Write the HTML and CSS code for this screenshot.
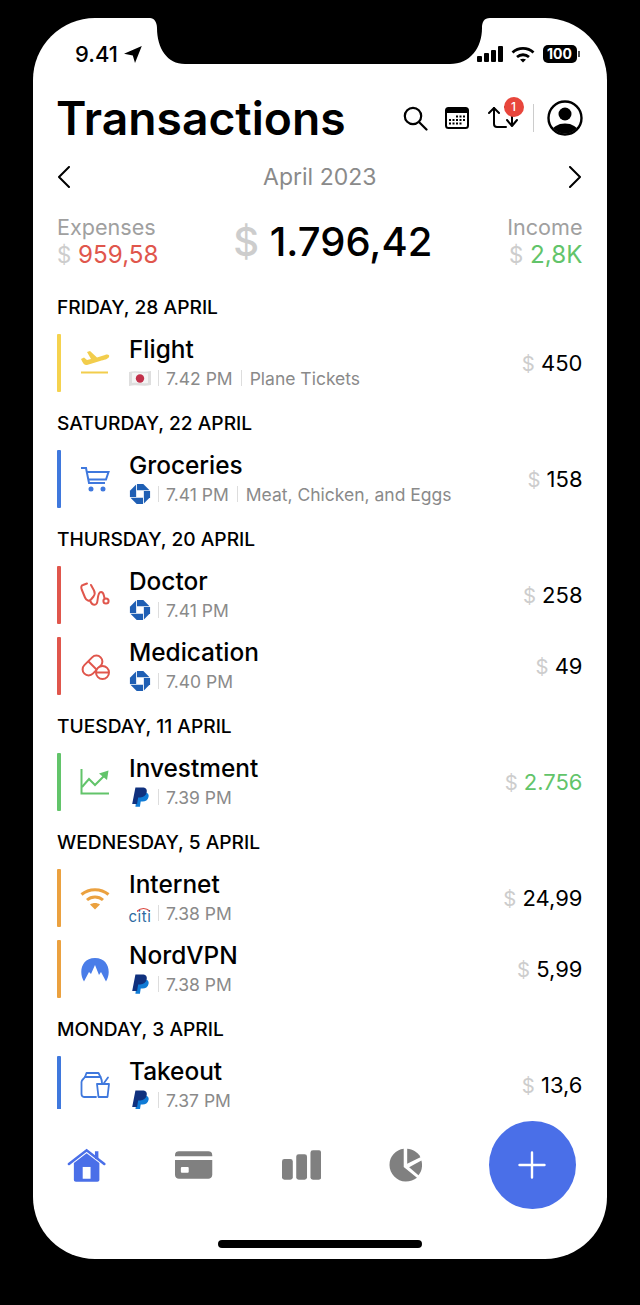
FILE: index.html
```html
<!DOCTYPE html>
<html lang="en">

<head>
    <meta charset="UTF-8">
    <meta name="viewport" content="width=device-width, initial-scale=1.0">
    <title>Transactions</title>
    <link rel="stylesheet" href="styles.css">
</head>

<body>

    <svg class="defs" width="0" height="0">
        <symbol id="chase" viewBox="0 0 24 24">
            <g fill="#1f5fb4">
                <path d="M8.700 1H15.600L22.400 7.800H8.700Z" />
                <path d="M8.700 1H15.600L22.400 7.800H8.700Z" transform="rotate(90 12 12)" />
                <path d="M8.700 1H15.600L22.400 7.800H8.700Z" transform="rotate(180 12 12)" />
                <path d="M8.700 1H15.600L22.400 7.800H8.700Z" transform="rotate(270 12 12)" />
            </g>
        </symbol>
        <symbol id="paypal" viewBox="0 0 24 24">
            <path fill="#0f7bd6" d="M9 7h8c3.500 0 5 2 4.300 5-.7 3.200-3.300 5-6.500 5h-2l-.9 5.500H7Z" />
            <path fill="#10317e" d="M7 1.500h7.500c3.800 0 5.500 2 4.800 5.300-.8 3.500-3.500 5.700-7 5.700H10l-1.200 7H3.500Z" />
        </symbol>
    </svg>

    <div class="screen">
        <svg class="notch" viewBox="0 0 340 46" width="340" height="46">
            <path d="M0 0H340C334 0 332 4 332 10C332 30 320 46 300 46H35C17 46 7 30 7 10C7 4 4 0 0 0Z" />
        </svg>

        <div class="status-bar">
            <div class="status-time">
                <span>9.41</span>
                <svg width="18" height="17" viewBox="0 0 18 17"><path d="M17.800 0 11 17 8.800 9.500 0 7.800Z" /></svg>
            </div>
            <div class="status-icons">
                <svg width="26" height="16" viewBox="0 0 26 16">
                    <rect x="0" y="10" width="5" height="6" rx="1" />
                    <rect x="7" y="7" width="5" height="9" rx="1" />
                    <rect x="14" y="4" width="5" height="12" rx="1" />
                    <rect x="21" y="0" width="5" height="16" rx="1" />
                </svg>
                <svg width="24" height="17" viewBox="0 0 24 17" fill="none" stroke="#000" stroke-width="2.800">
                    <path d="M1.500 6.500C7.500 1 16.500 1 22.500 6.500" />
                    <path d="M6 11C9.500 8 14.500 8 18 11" />
                    <path d="M12 16.500 9 13.600C10.700 12.300 13.300 12.300 15 13.600Z" fill="#000" stroke="none" />
                </svg>
                <div class="battery"><span class="battery-level">100</span><span class="battery-nub"></span></div>
            </div>
        </div>

        <header class="title-row">
            <h1>Transactions</h1>
            <div class="actions">
                <svg class="act-search" width="25" height="25" viewBox="0 0 25 25" fill="none" stroke="#000" stroke-width="2.200">
                    <circle cx="10" cy="10" r="8.200" />
                    <path d="M16 16 23.500 23.500" stroke-linecap="round" />
                </svg>
                <svg class="act-calendar" width="24" height="22" viewBox="0 0 24 22">
                    <rect x="1" y="1" width="22" height="20" rx="2.500" fill="#fff" stroke="#000" stroke-width="2" />
                    <rect x="1" y="1" width="22" height="5" fill="#000" />
                    <g fill="#000">
                        <rect x="11" y="8.500" width="2" height="2" /><rect x="14.500" y="8.500" width="2" height="2" /><rect x="18" y="8.500" width="2" height="2" />
                        <rect x="4" y="12" width="2" height="2" /><rect x="7.500" y="12" width="2" height="2" /><rect x="11" y="12" width="2" height="2" /><rect x="14.500" y="12" width="2" height="2" /><rect x="18" y="12" width="2" height="2" />
                        <rect x="4" y="15.500" width="2" height="2" /><rect x="7.500" y="15.500" width="2" height="2" /><rect x="11" y="15.500" width="2" height="2" /><rect x="14.500" y="15.500" width="2" height="2" />
                    </g>
                </svg>
                <div class="act-sync">
                    <svg width="30" height="22" viewBox="0 0 30 22" fill="none" stroke="#000" stroke-width="2" stroke-linecap="round" stroke-linejoin="round">
                        <path d="M1 7 6 2 11 7" />
                        <path d="M6 2V18C6 20 7 21 9 21H18" />
                        <path d="M17 1H24V19" />
                        <path d="M19 14 24 20 29 14" />
                    </svg>
                    <span class="badge">1</span>
                </div>
                <span class="act-divider"></span>
                <svg width="36" height="36" viewBox="0 0 36 36">
                    <defs><clipPath id="avatar-clip"><circle cx="18" cy="18" r="15.500" /></clipPath></defs>
                    <circle cx="18" cy="18" r="16.500" fill="#fff" stroke="#000" stroke-width="2.400" />
                    <circle cx="18" cy="14" r="6.500" fill="#000" />
                    <ellipse cx="18" cy="32" rx="13" ry="8.500" fill="#000" clip-path="url(#avatar-clip)" />
                </svg>
            </div>
        </header>

        <div class="month-nav">
            <svg width="14" height="22" viewBox="0 0 14 22" fill="none" stroke="#000" stroke-width="2" stroke-linecap="round" stroke-linejoin="round"><path d="M12 1 2 11 12 21" /></svg>
            <span class="month-label">April 2023</span>
            <svg width="14" height="22" viewBox="0 0 14 22" fill="none" stroke="#000" stroke-width="2" stroke-linecap="round" stroke-linejoin="round"><path d="M2 1 12 11 2 21" /></svg>
        </div>

        <section class="summary">
            <div class="summary-side">
                <div class="summary-label">Expenses</div>
                <div class="summary-value red"><span class="cur">$</span> 959,58</div>
            </div>
            <div class="summary-total"><span class="cur">$</span> 1.796,42</div>
            <div class="summary-side right">
                <div class="summary-label">Income</div>
                <div class="summary-value green"><span class="cur">$</span> 2,8K</div>
            </div>
        </section>

        <main class="list">
            <h2 class="day">FRIDAY, 28 APRIL</h2>
            <div class="row">
                <span class="bar yellow"></span>
                <div class="row-icon">
                    <svg width="30" height="26" viewBox="0 0 30 26" fill="#f2cd4c">
                        <path d="M1 9 4 7.500 7 10 11 9 7 2 10 1 17 7.500 25 5C28 4 30 5 29 7 28 9 24 10 20 11L7 15C5 15.500 3 14 1 9Z" />
                        <rect x="1" y="21.500" width="27" height="2" />
                    </svg>
                </div>
                <div class="row-body">
                    <div class="row-title">Flight</div>
                    <div class="row-sub">
                        <svg class="mini" width="22" height="17" viewBox="0 0 22 17">
                            <path fill="#dedede" d="M0 2C7 0 14 3 22 1V15C14 17 7 14 0 16Z" />
                            <path fill="#f4f4f4" d="M3 3C8 2 14 4 19 3V13C14 14 8 12 3 13Z" />
                            <circle cx="11" cy="8.500" r="4.200" fill="#c2304a" />
                        </svg>
                        <span class="sep"></span><span>7.42 PM</span><span class="sep tag-sep"></span><span>Plane Tickets</span>
                    </div>
                </div>
                <div class="amount"><span class="cur">$</span> 450</div>
            </div>

            <h2 class="day">SATURDAY, 22 APRIL</h2>
            <div class="row">
                <span class="bar blue"></span>
                <div class="row-icon">
                    <svg width="30" height="26" viewBox="0 0 30 26" fill="none" stroke="#3f78dd" stroke-width="2">
                        <path d="M1 2H6L9 17H25" />
                        <path d="M6.500 6H28.500L26 13.500H8" />
                        <circle cx="11" cy="23" r="1.500" fill="#3f78dd" />
                        <circle cx="23" cy="23" r="1.500" fill="#3f78dd" />
                    </svg>
                </div>
                <div class="row-body">
                    <div class="row-title">Groceries</div>
                    <div class="row-sub">
                        <svg class="mini" width="22" height="22"><use href="#chase" /></svg>
                        <span class="sep"></span><span>7.41 PM</span><span class="sep tag-sep"></span><span>Meat, Chicken, and Eggs</span>
                    </div>
                </div>
                <div class="amount"><span class="cur">$</span> 158</div>
            </div>

            <h2 class="day">THURSDAY, 20 APRIL</h2>
            <div class="row">
                <span class="bar red-bg"></span>
                <div class="row-icon">
                    <svg width="30" height="26" viewBox="0 0 30 26" fill="none" stroke="#e0564c" stroke-width="2" stroke-linecap="round" stroke-linejoin="round">
                        <path d="M7 1.500 3 3C1 3.500 1 5.500 1.700 7.500L5 15.500C6.500 19 9.500 19.500 11 17.500L13.500 14.500C15 12.500 15 10.500 14 8.500L11 3" />
                        <path d="M10 18.500C12.500 24.500 17 24 17.500 18.500 18 13 19 10 21 10 24 10 23.500 13 24.500 16" />
                        <circle cx="26" cy="19" r="2.600" />
                    </svg>
                </div>
                <div class="row-body">
                    <div class="row-title">Doctor</div>
                    <div class="row-sub">
                        <svg class="mini" width="22" height="22"><use href="#chase" /></svg>
                        <span class="sep"></span><span>7.41 PM</span>
                    </div>
                </div>
                <div class="amount"><span class="cur">$</span> 258</div>
            </div>
            <div class="row">
                <span class="bar red-bg"></span>
                <div class="row-icon">
                    <svg width="30" height="27" viewBox="0 0 30 27" fill="none" stroke="#e0564c" stroke-width="2">
                        <rect x="1" y="6.500" width="23" height="12" rx="6" transform="rotate(-45 12.500 12.500)" />
                        <path d="M8.500 8.500 16.500 16.500" />
                        <circle cx="22.500" cy="19.500" r="6.500" fill="#fff" />
                        <path d="M16 19.500H29" />
                    </svg>
                </div>
                <div class="row-body">
                    <div class="row-title">Medication</div>
                    <div class="row-sub">
                        <svg class="mini" width="22" height="22"><use href="#chase" /></svg>
                        <span class="sep"></span><span>7.40 PM</span>
                    </div>
                </div>
                <div class="amount"><span class="cur">$</span> 49</div>
            </div>

            <h2 class="day">TUESDAY, 11 APRIL</h2>
            <div class="row">
                <span class="bar green-bg"></span>
                <div class="row-icon">
                    <svg width="30" height="26" viewBox="0 0 30 26" fill="none" stroke="#62c46a" stroke-width="2">
                        <path d="M1.500 0V24.500H29" />
                        <path d="M2 18 9 10 15 16 25 6" />
                        <path d="M19 4.500 28.500 1.500 27 11Z" fill="#62c46a" stroke="none" />
                    </svg>
                </div>
                <div class="row-body">
                    <div class="row-title">Investment</div>
                    <div class="row-sub">
                        <svg class="mini" width="22" height="22"><use href="#paypal" /></svg>
                        <span class="sep"></span><span>7.39 PM</span>
                    </div>
                </div>
                <div class="amount green"><span class="cur">$</span> 2.756</div>
            </div>

            <h2 class="day">WEDNESDAY, 5 APRIL</h2>
            <div class="row">
                <span class="bar orange"></span>
                <div class="row-icon">
                    <svg width="30" height="23" viewBox="0 0 30 23" fill="none" stroke="#eba13f" stroke-width="3">
                        <path d="M1.500 7.500C9 1 21 1 28.500 7.500" />
                        <path d="M7 13C11.500 9 18.500 9 23 13" />
                        <path d="M15 22.500 10 17.500C13 15.500 17 15.500 20 17.500Z" fill="#eba13f" stroke="none" />
                    </svg>
                </div>
                <div class="row-body">
                    <div class="row-title">Internet</div>
                    <div class="row-sub">
                        <div class="citi">
                            <svg width="13" height="5" viewBox="0 0 13 5" fill="none" stroke="#d9453d" stroke-width="1.200"><path d="M0 4.500C3.500 .5 9.500 .5 13 4.500" /></svg>
                            <span>citi</span>
                        </div>
                        <span class="sep"></span><span>7.38 PM</span>
                    </div>
                </div>
                <div class="amount"><span class="cur">$</span> 24,99</div>
            </div>
            <div class="row">
                <span class="bar orange"></span>
                <div class="row-icon">
                    <svg width="30" height="25" viewBox="0 0 30 25">
                        <path fill="#4a7de8" d="M4 24.500C-1.500 16 1 1 15 1 29 1 31.500 16 26 24.500L21 15 19 18 15 8 11 17 9 15Z" />
                    </svg>
                </div>
                <div class="row-body">
                    <div class="row-title">NordVPN</div>
                    <div class="row-sub">
                        <svg class="mini" width="22" height="22"><use href="#paypal" /></svg>
                        <span class="sep"></span><span>7.38 PM</span>
                    </div>
                </div>
                <div class="amount"><span class="cur">$</span> 5,99</div>
            </div>

            <h2 class="day">MONDAY, 3 APRIL</h2>
            <div class="row">
                <span class="bar blue"></span>
                <div class="row-icon">
                    <svg width="30" height="28" viewBox="0 0 30 28" fill="none" stroke="#3f78dd" stroke-width="1.800" stroke-linejoin="round" stroke-linecap="round">
                        <path d="M16 26H4C2.500 26 1.500 25 1.500 23V11C1.500 9 3.500 8 5 6L6.500 2H18.500L20.500 6C21.500 8 22 9 22 12" />
                        <path d="M5 6H20.500" />
                        <path d="M17 13H29L27.500 26H18.500Z" />
                        <path d="M24 12 28 6.500" />
                    </svg>
                </div>
                <div class="row-body">
                    <div class="row-title">Takeout</div>
                    <div class="row-sub">
                        <svg class="mini" width="22" height="22"><use href="#paypal" /></svg>
                        <span class="sep"></span><span>7.37 PM</span>
                    </div>
                </div>
                <div class="amount"><span class="cur">$</span> 13,6</div>
            </div>
        </main>

        <footer class="tab-area">
            <nav class="tabs">
                <svg class="tab" width="40" height="36" viewBox="0 0 40 36">
                    <path fill="#4a6fe8" d="M7 16 20 6 33 16V33C33 34.500 32 35 31 35H9C8 35 7 34.500 7 33Z" />
                    <rect x="16" y="20" width="8" height="12" fill="#fff" />
                    <rect x="28.500" y="4" width="3.500" height="8" fill="#4a6fe8" />
                    <path d="M2 17 20 3 38 17" fill="none" stroke="#4a6fe8" stroke-width="2.600" stroke-linecap="round" />
                </svg>
                <svg class="tab card" width="40" height="30" viewBox="0 0 40 30">
                    <path fill="#808080" d="M1 5C1 2 3 1 5 1H35C37 1 39 2 39 5V6H1ZM1 10H39V25C39 28 37 29 35 29H5C3 29 1 28 1 25Z" />
                    <rect x="7" y="17" width="8" height="6" rx="1" fill="#fff" />
                </svg>
                <svg class="tab" width="40" height="30" viewBox="0 0 40 30" fill="#808080">
                    <rect x="0" y="9" width="11" height="21" rx="2.500" />
                    <rect x="14.500" y="4" width="11" height="26" rx="2.500" />
                    <rect x="29" y="0" width="11" height="30" rx="2.500" />
                </svg>
                <svg class="tab pie" width="34" height="34" viewBox="0 0 34 34" fill="#808080">
                    <path d="M15 .5V19L28.500 30C25.500 32.500 21.500 33.800 17 33.800 8 33.800.5 26 .5 17 .5 8 7 1.500 15 .5Z" />
                    <path d="M18.500.5C24 1 29.500 4 32 9L18.500 15.800Z" />
                    <path d="M33 12.500C34.500 17.500 33.500 23.500 30 27.500L20.500 19.200Z" />
                </svg>
                <button class="fab">
                    <svg width="28" height="28" viewBox="0 0 28 28" stroke="#fff" stroke-width="2.400" stroke-linecap="round"><path d="M14 1.500V26.500M1.500 14H26.500" /></svg>
                </button>
            </nav>
            <div class="home-indicator"></div>
        </footer>
    </div>

</body>

</html>
```

FILE: styles.css
```css
body {
    font-family: Inter, 'Liberation Sans', sans-serif;
    margin: 0;
    padding: 18px 0 0 33px;
    height: 1287px;
    background-color: #000;
    color: #000;
    overflow: hidden;
}

.defs {
    position: absolute;
}

.screen {
    position: relative;
    width: 573.5px;
    height: 1241px;
    background-color: #fff;
    border-radius: 62px;
    overflow: hidden;
    display: flex;
    flex-direction: column;
}

.notch {
    position: absolute;
    top: 0;
    left: 117px;
    fill: #000;
}

.status-bar {
    height: 72px;
    flex: none;
    display: flex;
    align-items: center;
    justify-content: space-between;
    padding: 0 27px 0 42px;
}

.status-time {
    display: flex;
    align-items: center;
    gap: 6px;
    font-size: 22px;
    font-weight: 500;
}

.status-icons {
    display: flex;
    align-items: center;
    gap: 8px;
}

.battery {
    display: flex;
    align-items: center;
    gap: 1px;
}

.battery-level {
    width: 34px;
    height: 18px;
    line-height: 18px;
    border-radius: 5px;
    background-color: #000;
    color: #fff;
    font-size: 14px;
    font-weight: 700;
    text-align: center;
}

.battery-nub {
    width: 2px;
    height: 6px;
    background-color: #555;
}

.title-row {
    height: 56px;
    flex: none;
    display: flex;
    align-items: center;
    justify-content: space-between;
    padding: 0 24px 0 23px;
}

h1 {
    margin: 0;
    font-size: 46.2px;
    font-weight: 600;
    line-height: 56px;
}

.actions {
    display: flex;
    align-items: center;
}

.act-search {
    margin-right: 17px;
}

.act-calendar {
    margin-right: 19px;
}

.act-sync {
    position: relative;
    width: 32px;
    height: 22px;
    margin: -2px 13px 0 0;
}

.act-sync svg {
    display: block;
}

.badge {
    position: absolute;
    top: -9px;
    right: -4px;
    width: 20px;
    height: 20px;
    line-height: 20px;
    border-radius: 50%;
    background-color: #e8463c;
    color: #fff;
    font-size: 12px;
    font-weight: 500;
    text-align: center;
}

.act-divider {
    width: 1px;
    height: 28px;
    background-color: #ccc;
    margin-right: 13px;
}

.month-nav {
    height: 30px;
    flex: none;
    margin-top: 16px;
    display: flex;
    align-items: center;
    justify-content: space-between;
    padding: 0 24px;
}

.month-label {
    font-size: 23px;
    color: #8a8a8a;
}

.summary {
    height: 58px;
    flex: none;
    margin-top: 20px;
    display: flex;
    align-items: center;
    justify-content: space-between;
    padding: 0 24px;
}

.summary-side.right {
    text-align: right;
}

.summary-label {
    font-size: 21.6px;
    line-height: 28px;
    color: #a0a0a0;
}

.summary-value {
    font-size: 24.2px;
    line-height: 28px;
}

.summary-total {
    font-size: 40px;
    font-weight: 500;
}

.cur {
    color: #cdcdcd;
}

.summary-value .cur,
.amount .cur {
    font-size: 0.92em;
}

.red {
    color: #e0564c;
}

.green {
    color: #62c46a;
}

.list {
    margin-top: 6px;
    height: 833px;
    flex: none;
    overflow: hidden;
    padding: 0 24px;
}

.day {
    margin: 0;
    padding: 23px 0 19px;
    font-size: 19.2px;
    font-weight: 500;
    line-height: 16px;
}

.row {
    display: flex;
    align-items: center;
    height: 58px;
}

.row + .row {
    margin-top: 13px;
}

.bar {
    width: 4px;
    height: 100%;
    border-radius: 1px;
    flex: none;
}

.yellow {
    background-color: #f5d24e;
}

.blue {
    background-color: #3f78dd;
}

.red-bg {
    background-color: #e0564c;
}

.green-bg {
    background-color: #62c46a;
}

.orange {
    background-color: #eba13f;
}

.row-icon {
    width: 68px;
    flex: none;
    display: flex;
    justify-content: center;
}

.row-body {
    flex: 1;
    align-self: flex-start;
}

.row-title {
    font-size: 24.4px;
    font-weight: 500;
    line-height: 30px;
}

.row-sub {
    display: flex;
    align-items: center;
    height: 24px;
    margin-top: 2px;
    font-size: 17.5px;
    color: #8a8a8a;
}

.mini {
    width: 22px;
    flex: none;
}

.citi {
    width: 22px;
    height: 24px;
    flex: none;
    display: flex;
    flex-direction: column;
    align-items: center;
    justify-content: flex-end;
    color: #2d6a9f;
    font-size: 15px;
    line-height: 11px;
    letter-spacing: 0.6px;
    padding-bottom: 3px;
    box-sizing: border-box;
}

.citi svg {
    margin: 0 0 -1px 6px;
}

.sep {
    width: 1px;
    height: 16px;
    background-color: #ddd;
    margin: 0 7px;
    flex: none;
}

.tag-sep {
    margin: 0 8px;
}

.amount {
    font-size: 22px;
    white-space: nowrap;
}

.tab-area {
    flex: 1;
    padding-top: 12px;
}

.tabs {
    height: 88px;
    display: flex;
    align-items: center;
    padding: 0 31px 0 34px;
    gap: 67px;
}

.tab.card {
    margin: 0 1px;
}

.tab.pie {
    margin-left: 1px;
}

.fab {
    width: 88px;
    height: 88px;
    border: none;
    border-radius: 50%;
    background-color: #4a6fe8;
    padding: 0;
    margin-left: auto;
    display: flex;
    align-items: center;
    justify-content: center;
}

.home-indicator {
    width: 204px;
    height: 8px;
    margin: 31px auto 0;
    border-radius: 4px;
    background-color: #000;
}
```
